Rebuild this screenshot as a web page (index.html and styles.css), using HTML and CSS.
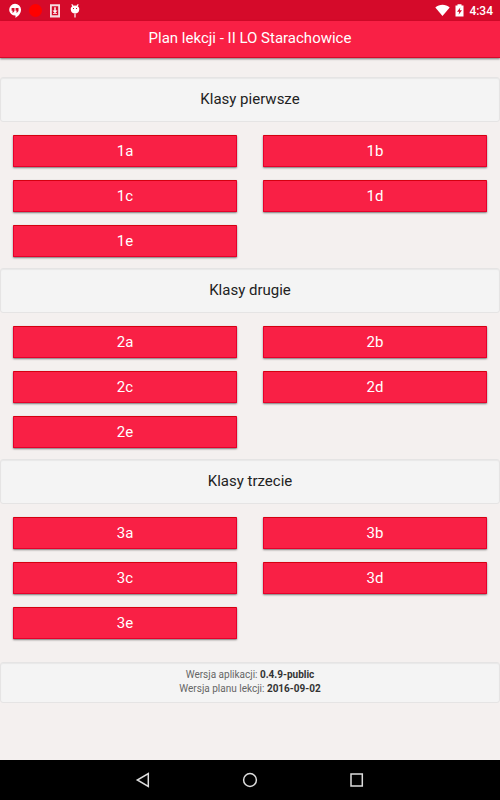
FILE: index.html
```html
<!DOCTYPE html>
<html lang="pl">

<head>
    <meta charset="UTF-8">
    <meta name="viewport" content="width=device-width, initial-scale=1.0">
    <title>Plan lekcji - II LO Starachowice</title>
    <link rel="stylesheet" href="styles.css">
</head>

<body>
    <div class="status-bar">
        <div class="status-icons">
            <svg width="14" height="16" viewBox="0 0 14 16">
                <path fill="#fff" d="M7 .8a6 5.800 0 0 1 6 5.800c0 3.800-2.500 6.600-5.500 8.300v-2.400A6 5.800 0 1 1 7 .8z" />
                <path fill="#d50a2a" d="M3.600 5h2.900v3L5.200 9.500H4.100L4.900 7.800H3.600zM7.600 5h2.900v3L9.200 9.500H8.100L8.900 7.800H7.600z" />
            </svg>
            <span class="record-dot"></span>
            <svg width="12" height="16" viewBox="0 0 12 16">
                <path fill="#f6dce0" fill-rule="evenodd" d="M0 1.300h10v13.200H0zM1.800 3.300v9h6.400v-9z" />
                <path fill="#fff" d="M4.300 4.300h1.400v3.300h1.800L5 10.200 2.500 7.600h1.800zM3 10.300h4v.8H3z" />
            </svg>
            <svg width="12" height="16" viewBox="0 0 12 16">
                <path stroke="#fff" stroke-width="1.200" d="M1.700 1.300l1.800 2.300M8.300 1.300L6.500 3.600" />
                <path fill="#fff" d="M.8 5.500C1.100 3.600 2.800 2.600 5 2.600s3.900 1 4.200 2.900v1.300c0 2.200-1.800 3.800-4.200 3.800S.8 9 .8 6.800z" />
                <path fill="#ed9daa" d="M4 10.300h2v4.200H4z" />
                <path fill="#d50a2a" d="M3 5h1v1H3zM6 5h1v1H6z" />
            </svg>
        </div>
        <div class="status-icons status-right">
            <svg width="15" height="13" viewBox="0 0 15 13">
                <path fill="#fff" d="M.3 3.500C4.400-.3 10.600-.3 14.700 3.500L7.500 12z" />
            </svg>
            <svg width="9" height="13" viewBox="0 0 9 13">
                <path fill="#fff" d="M.5 1.500h2V.3h4v1.200h2v11h-8z" />
                <path fill="#d50a2a" d="M5.300 3.500L2 7.700h2.200l-.6 3L7 6.300H4.800z" />
            </svg>
            <span class="clock">4:34</span>
        </div>
    </div>

    <header class="header">Plan lekcji - II LO Starachowice</header>

    <main class="content">
        <div class="well">Klasy pierwsze</div>
        <div class="classes">
            <button class="btn">1a</button>
            <button class="btn">1b</button>
            <button class="btn">1c</button>
            <button class="btn">1d</button>
            <button class="btn">1e</button>
        </div>

        <div class="well">Klasy drugie</div>
        <div class="classes">
            <button class="btn">2a</button>
            <button class="btn">2b</button>
            <button class="btn">2c</button>
            <button class="btn">2d</button>
            <button class="btn">2e</button>
        </div>

        <div class="well">Klasy trzecie</div>
        <div class="classes">
            <button class="btn">3a</button>
            <button class="btn">3b</button>
            <button class="btn">3c</button>
            <button class="btn">3d</button>
            <button class="btn">3e</button>
        </div>

        <div class="well version">
            <div>Wersja aplikacji: <b>0.4.9-public</b></div>
            <div>Wersja planu lekcji: <b>2016-09-02</b></div>
        </div>
    </main>

    <nav class="nav-bar">
        <svg width="16" height="18" viewBox="0 0 16 18">
            <path d="M13.300 2.500v13L2.300 9z" />
        </svg>
        <svg width="16" height="18" viewBox="0 0 16 18">
            <circle cx="8" cy="9" r="6.400" />
        </svg>
        <svg width="16" height="18" viewBox="0 0 16 18">
            <path d="M2 3h11.300v12H2z" />
        </svg>
    </nav>
</body>

</html>
```

FILE: styles.css
```css
* {
    box-sizing: border-box;
}

body {
    margin: 0;
    height: 800px;
    display: flex;
    flex-direction: column;
    font-family: Roboto, sans-serif;
    background-color: #f4f0ef;
    overflow: hidden;
}

svg {
    display: block;
}

.status-bar {
    height: 21px;
    padding: 0 7px 0 8px;
    display: flex;
    justify-content: space-between;
    align-items: center;
    background: #d50a2a;
}

.status-icons {
    display: flex;
    align-items: center;
    gap: 7px;
}

.status-right {
    gap: 5px;
}

.record-dot {
    width: 13px;
    height: 13px;
    border-radius: 50%;
    background: #ff0000;
}

.status-icons .record-dot + svg {
    margin: 0 1px;
}

.clock {
    color: #fff;
    font-size: 12px;
    font-weight: 500;
    line-height: 19px;
    padding-top: 2px;
}

.header {
    height: 37px;
    line-height: 35px;
    text-align: center;
    color: #fff;
    font-size: 15px;
    background: #f92045;
    border-bottom: 1px solid #d50a2a;
    box-shadow: 0 1px 2px rgba(0, 0, 0, 0.5);
}

.content {
    flex: 1;
    padding-top: 19px;
}

.well {
    height: 45px;
    line-height: 43px;
    text-align: center;
    color: #222;
    font-size: 15px;
    background: #f4f4f4;
    border: 1px solid #e5e4e4;
    border-radius: 3px;
    box-shadow: inset 0 1px 1px rgba(0, 0, 0, 0.05);
}

.classes {
    display: grid;
    grid-template-columns: 1fr 1fr;
    grid-auto-rows: 32px;
    gap: 13px 26px;
    padding: 13px 13px 11px;
}

.btn {
    padding: 0;
    border: 1px solid #e6002a;
    border-top-color: #d40010;
    border-radius: 1px;
    background: #f92045;
    color: #fff;
    font-family: inherit;
    font-size: 15px;
    cursor: pointer;
    box-shadow: 0 1px 2px rgba(0, 0, 0, 0.5);
}

.version {
    height: 41px;
    margin-top: 12px;
    padding-top: 5px;
    font-size: 10px;
    line-height: 14px;
    color: #666;
}

.version b {
    color: #333;
}

.nav-bar {
    height: 40px;
    display: flex;
    justify-content: center;
    align-items: center;
    gap: 91px;
    background: #000;
}

.nav-bar svg {
    fill: none;
    stroke: #ddd;
    stroke-width: 1.500;
}
```
